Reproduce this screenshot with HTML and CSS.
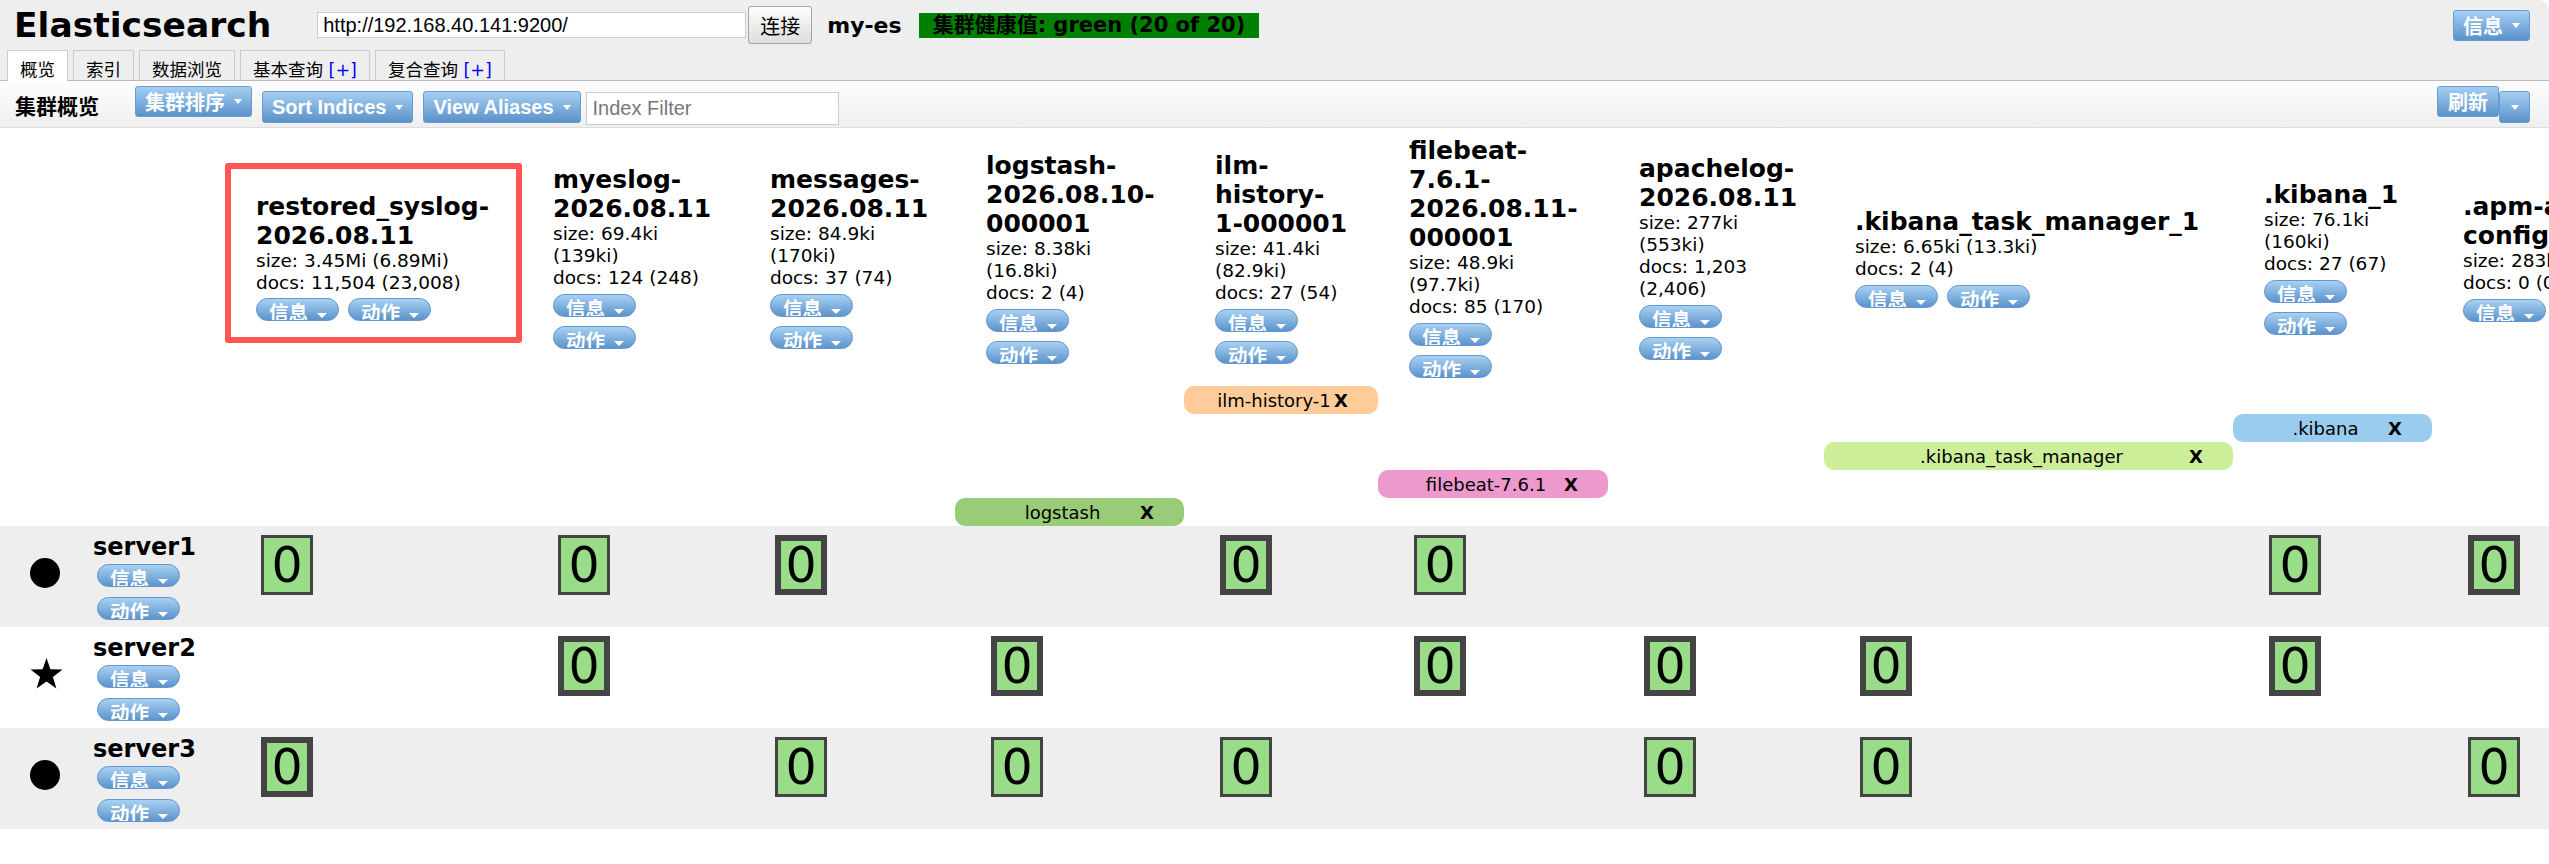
FILE: index.html
```html
<!DOCTYPE html>
<html lang="zh">
<head>
    <meta charset="UTF-8">
    <title>Elasticsearch Head</title>
    <link rel="stylesheet" href="styles.css">
</head>
<body>
    <div class="header">
        <div class="topbar">
            <h1 class="brand">Elasticsearch</h1>
            <input class="url" type="text" value="http://192.168.40.141:9200/">
            <button class="btn-plain">连接</button>
            <span class="cluster-name">my-es</span>
            <span class="health">集群健康值: green (20 of 20)</span>
            <span class="spacer"></span>
            <button class="btn-blue top-info">信息<span class="caret"></span></button>
        </div>
        <div class="tabs">
            <div class="tab active">概览</div>
            <div class="tab">索引</div>
            <div class="tab">数据浏览</div>
            <div class="tab">基本查询 <span class="plus">[+]</span></div>
            <div class="tab">复合查询 <span class="plus">[+]</span></div>
        </div>
    </div>

    <!-- 工具栏 -->
    <div class="toolbar">
        <span class="toolbar-title">集群概览</span>
        <button class="btn-blue cjk first">集群排序<span class="caret"></span></button>
        <button class="btn-blue latin">Sort Indices<span class="caret"></span></button>
        <button class="btn-blue latin">View Aliases<span class="caret"></span></button>
        <input class="filter" type="text" placeholder="Index Filter">
        <span class="spacer"></span>
        <button class="btn-blue cjk refresh">刷新</button>
        <button class="btn-blue latin refresh-menu"><span class="caret"></span></button>
    </div>

    <!-- 集群概览 -->
    <div class="overview">
        <table>
            <colgroup>
                <col class="c-node">
                <col class="c-restored">
                <col class="c-myeslog">
                <col class="c-messages">
                <col class="c-logstash">
                <col class="c-ilm">
                <col class="c-filebeat">
                <col class="c-apache">
                <col class="c-kibana-tm">
                <col class="c-kibana">
                <col class="c-apm">
            </colgroup>
            <tr class="index-row">
                <th></th>
                <th>
                    <div class="index selected">
                        <div class="index-body w232">
                            <div class="index-title">restored_syslog-2026.08.11</div>
                            <div class="index-stat">size: 3.45Mi (6.89Mi)</div>
                            <div class="index-stat">docs: 11,504 (23,008)</div>
                            <div class="index-actions">
                                <span class="pill">信息<span class="caret"></span></span>
                                <span class="pill">动作<span class="caret"></span></span>
                            </div>
                        </div>
                    </div>
                </th>
                <th>
                    <div class="index">
                        <div class="index-body w160">
                            <div class="index-title">myeslog-2026.08.11</div>
                            <div class="index-stat">size: 69.4ki (139ki)</div>
                            <div class="index-stat">docs: 124 (248)</div>
                            <div class="index-actions">
                                <span class="pill">信息<span class="caret"></span></span>
                                <span class="pill">动作<span class="caret"></span></span>
                            </div>
                        </div>
                    </div>
                </th>
                <th>
                    <div class="index">
                        <div class="index-body w160">
                            <div class="index-title">messages-2026.08.11</div>
                            <div class="index-stat">size: 84.9ki (170ki)</div>
                            <div class="index-stat">docs: 37 (74)</div>
                            <div class="index-actions">
                                <span class="pill">信息<span class="caret"></span></span>
                                <span class="pill">动作<span class="caret"></span></span>
                            </div>
                        </div>
                    </div>
                </th>
                <th>
                    <div class="index">
                        <div class="index-body w172">
                            <div class="index-title">logstash-2026.08.10-000001</div>
                            <div class="index-stat">size: 8.38ki (16.8ki)</div>
                            <div class="index-stat">docs: 2 (4)</div>
                            <div class="index-actions">
                                <span class="pill">信息<span class="caret"></span></span>
                                <span class="pill">动作<span class="caret"></span></span>
                            </div>
                        </div>
                    </div>
                </th>
                <th>
                    <div class="index">
                        <div class="index-body w134">
                            <div class="index-title">ilm-history-1-000001</div>
                            <div class="index-stat">size: 41.4ki (82.9ki)</div>
                            <div class="index-stat">docs: 27 (54)</div>
                            <div class="index-actions">
                                <span class="pill">信息<span class="caret"></span></span>
                                <span class="pill">动作<span class="caret"></span></span>
                            </div>
                        </div>
                    </div>
                </th>
                <th>
                    <div class="index">
                        <div class="index-body w172">
                            <div class="index-title">filebeat-7.6.1-2026.08.11-000001</div>
                            <div class="index-stat">size: 48.9ki (97.7ki)</div>
                            <div class="index-stat">docs: 85 (170)</div>
                            <div class="index-actions">
                                <span class="pill">信息<span class="caret"></span></span>
                                <span class="pill">动作<span class="caret"></span></span>
                            </div>
                        </div>
                    </div>
                </th>
                <th>
                    <div class="index">
                        <div class="index-body w162">
                            <div class="index-title">apachelog-2026.08.11</div>
                            <div class="index-stat">size: 277ki (553ki)</div>
                            <div class="index-stat">docs: 1,203 (2,406)</div>
                            <div class="index-actions">
                                <span class="pill">信息<span class="caret"></span></span>
                                <span class="pill">动作<span class="caret"></span></span>
                            </div>
                        </div>
                    </div>
                </th>
                <th>
                    <div class="index">
                        <div class="index-body w350">
                            <div class="index-title">.kibana_task_manager_1</div>
                            <div class="index-stat">size: 6.65ki (13.3ki)</div>
                            <div class="index-stat">docs: 2 (4)</div>
                            <div class="index-actions">
                                <span class="pill">信息<span class="caret"></span></span>
                                <span class="pill">动作<span class="caret"></span></span>
                            </div>
                        </div>
                    </div>
                </th>
                <th>
                    <div class="index">
                        <div class="index-body w140">
                            <div class="index-title">.kibana_1</div>
                            <div class="index-stat">size: 76.1ki (160ki)</div>
                            <div class="index-stat">docs: 27 (67)</div>
                            <div class="index-actions">
                                <span class="pill">信息<span class="caret"></span></span>
                                <span class="pill">动作<span class="caret"></span></span>
                            </div>
                        </div>
                    </div>
                </th>
                <th>
                    <div class="index">
                        <div class="index-body w200">
                            <div class="index-title">.apm-agent-configuration</div>
                            <div class="index-stat">size: 283b (566b)</div>
                            <div class="index-stat">docs: 0 (0)</div>
                            <div class="index-actions">
                                <span class="pill">信息<span class="caret"></span></span>
                                <span class="pill">动作<span class="caret"></span></span>
                            </div>
                        </div>
                    </div>
                </th>
            </tr>

            <!-- 别名 -->
            <tr class="alias-row">
                <td colspan="5"></td>
                <td><div class="alias peach"><span class="alias-name">ilm-history-1</span><span class="alias-x">X</span></div></td>
                <td colspan="5"></td>
            </tr>
            <tr class="alias-row">
                <td colspan="9"></td>
                <td><div class="alias blue"><span class="alias-name">.kibana</span><span class="alias-x">X</span></div></td>
                <td></td>
            </tr>
            <tr class="alias-row">
                <td colspan="8"></td>
                <td><div class="alias lime"><span class="alias-name">.kibana_task_manager</span><span class="alias-x">X</span></div></td>
                <td colspan="2"></td>
            </tr>
            <tr class="alias-row">
                <td colspan="6"></td>
                <td><div class="alias pink"><span class="alias-name">filebeat-7.6.1</span><span class="alias-x">X</span></div></td>
                <td colspan="4"></td>
            </tr>
            <tr class="alias-row">
                <td colspan="4"></td>
                <td><div class="alias green"><span class="alias-name">logstash</span><span class="alias-x">X</span></div></td>
                <td colspan="6"></td>
            </tr>

            <!-- 节点 -->
            <tr class="node-row shaded">
                <td>
                    <div class="node">
                        <span class="node-icon dot"></span>
                        <div class="node-info">
                            <div class="node-name">server1</div>
                            <span class="pill">信息<span class="caret"></span></span>
                            <span class="pill">动作<span class="caret"></span></span>
                        </div>
                    </div>
                </td>
                <td><div class="shard">0</div></td>
                <td><div class="shard">0</div></td>
                <td><div class="shard primary">0</div></td>
                <td></td>
                <td><div class="shard primary">0</div></td>
                <td><div class="shard">0</div></td>
                <td></td>
                <td></td>
                <td><div class="shard">0</div></td>
                <td><div class="shard primary">0</div></td>
            </tr>
            <tr class="node-row">
                <td>
                    <div class="node">
                        <svg class="node-icon" width="33" height="31" viewBox="0 0 33 31">
                            <polygon points="16.5,0 20.4,11.2 32.5,11.6 22.9,18.9 26.4,30.5 16.5,23.6 6.6,30.5 10.1,18.9 0.5,11.6 12.6,11.2" fill="#000"/>
                        </svg>
                        <div class="node-info">
                            <div class="node-name">server2</div>
                            <span class="pill">信息<span class="caret"></span></span>
                            <span class="pill">动作<span class="caret"></span></span>
                        </div>
                    </div>
                </td>
                <td></td>
                <td><div class="shard primary">0</div></td>
                <td></td>
                <td><div class="shard primary">0</div></td>
                <td></td>
                <td><div class="shard primary">0</div></td>
                <td><div class="shard primary">0</div></td>
                <td><div class="shard primary">0</div></td>
                <td><div class="shard primary">0</div></td>
                <td></td>
            </tr>
            <tr class="node-row shaded">
                <td>
                    <div class="node">
                        <span class="node-icon dot"></span>
                        <div class="node-info">
                            <div class="node-name">server3</div>
                            <span class="pill">信息<span class="caret"></span></span>
                            <span class="pill">动作<span class="caret"></span></span>
                        </div>
                    </div>
                </td>
                <td><div class="shard primary">0</div></td>
                <td></td>
                <td><div class="shard">0</div></td>
                <td><div class="shard">0</div></td>
                <td><div class="shard">0</div></td>
                <td></td>
                <td><div class="shard">0</div></td>
                <td><div class="shard">0</div></td>
                <td></td>
                <td><div class="shard">0</div></td>
            </tr>
        </table>
    </div>
</body>
</html>
```

FILE: styles.css
```css
body {
    margin: 0;
    font-family: "DejaVu Sans", "Noto Sans CJK SC", sans-serif;
    color: #000;
    background: #fff;
    overflow: hidden;
}
button, input {
    font-family: "Liberation Sans", "Noto Sans CJK SC", sans-serif;
    font-size: 20px;
}

/* 顶部 */
.header {
    background: #eee;
    border-bottom: 1px solid #bbb;
    border-top-right-radius: 10px;
}
.topbar {
    display: flex;
    align-items: center;
    height: 50px;
    padding-left: 14px;
}
.brand {
    margin: 0;
    font-size: 34.5px;
    font-weight: bold;
    line-height: 38px;
}
.url {
    margin-left: 46px;
    width: 429px;
    height: 26px;
    box-sizing: border-box;
    border: 1px solid #ccc;
    padding: 0 5px;
    background: #fff;
}
.btn-plain {
    margin-left: 2px;
    height: 38px;
    padding: 0 11px;
    border: 1px solid #a5a5a5;
    border-radius: 3px;
    background: linear-gradient(#fdfdfd, #dedede);
    color: #000;
}
.cluster-name {
    margin-left: 15px;
    font-size: 22px;
    font-weight: bold;
}
.health {
    margin-left: 17px;
    padding: 0 14px;
    height: 25px;
    line-height: 25px;
    background: #008000;
    font-size: 21px;
    font-weight: bold;
}
.spacer {
    flex: 1;
}
.top-info {
    margin-right: 19px;
    height: 32px;
}

.tabs {
    display: flex;
    gap: 5px;
    padding-left: 7px;
    height: 30px;
}
.tab {
    height: 30px;
    box-sizing: border-box;
    padding: 9px 12px 0;
    border: 1px solid #ccc;
    border-bottom: none;
    background: #eee;
    font-size: 17.5px;
    line-height: 20px;
    overflow: hidden;
}
.tab.active {
    height: 31px;
    margin-bottom: -1px;
    background: #fff;
}
.plus {
    color: #00f;
}

/* 按钮 */
.btn-blue {
    display: inline-flex;
    align-items: center;
    height: 31px;
    box-sizing: border-box;
    padding: 0 9px;
    border: 1px solid #6b9bd0;
    border-radius: 3px;
    background: linear-gradient(#a6cff2, #5a92ca);
    color: #fff;
    font-weight: bold;
    white-space: nowrap;
}
.btn-blue .caret {
    margin-left: 9px;
    border-left: 4px solid transparent;
    border-right: 4px solid transparent;
    border-top: 5px solid #fff;
}
.caret {
    display: inline-block;
    width: 0;
    height: 0;
}

.toolbar {
    display: flex;
    align-items: flex-start;
    height: 46px;
    padding-left: 15px;
    background: linear-gradient(#fdfdfd, #efefef);
    border-bottom: 1px solid #ddd;
}
.toolbar-title {
    margin-top: 14px;
    font-size: 21px;
    line-height: 24px;
    font-weight: bold;
}
.toolbar .cjk {
    margin-top: 5px;
}
.toolbar .latin {
    margin-top: 10px;
    height: 32px;
    margin-left: 10px;
}
.toolbar .first {
    margin-left: 36px;
}
.filter {
    margin: 11px 0 0 5px;
    width: 253px;
    height: 33px;
    box-sizing: border-box;
    border: 1px solid #ccc;
    padding: 0 6px;
}
.filter::placeholder {
    color: #777;
}
.refresh {
    padding: 0 10px;
}
.toolbar .refresh-menu {
    margin: 10px 19px 0 0;
    width: 31px;
    justify-content: center;
    padding: 0;
}
.refresh-menu .caret {
    margin-left: 0;
}

/* 集群概览 */
.overview {
    overflow: hidden;
}
table {
    border-collapse: collapse;
    table-layout: fixed;
    width: 2692px;
}
th, td {
    padding: 0;
}
.c-node { width: 225px; }
.c-restored { width: 297px; }
.c-myeslog { width: 217px; }
.c-messages { width: 216px; }
.c-logstash { width: 229px; }
.c-ilm { width: 194px; }
.c-filebeat { width: 230px; }
.c-apache { width: 216px; }
.c-kibana-tm { width: 409px; }
.c-kibana { width: 199px; }
.c-apm { width: 260px; }

.index-row th {
    height: 258px;
    vertical-align: middle;
    text-align: left;
    font-weight: normal;
}
.index {
    padding-left: 31px;
}
.index.selected {
    border: 6px solid #f55;
    border-radius: 3px;
    padding: 23px 0 16px 25px;
    margin-bottom: 8px;
}
.index.selected .index-actions {
    margin-top: 4px;
}
.w134 { width: 134px; }
.w140 { width: 140px; }
.w160 { width: 160px; }
.w162 { width: 162px; }
.w172 { width: 172px; }
.w200 { width: 200px; }
.w232 { width: 240px; }
.w350 { width: 360px; }
.index-title {
    font-size: 25px;
    line-height: 29px;
    font-weight: bold;
}
.index-stat {
    font-size: 18.5px;
    line-height: 22px;
}
.index-actions {
    display: flex;
    flex-wrap: wrap;
    gap: 9px;
    margin-top: 5px;
}

.pill {
    display: inline-flex;
    align-items: flex-start;
    height: 23px;
    box-sizing: border-box;
    padding: 4px 11px 0 12px;
    border: 1px solid #6497cd;
    border-radius: 12px;
    background: linear-gradient(#a9d1f3, #5b93cb);
    color: #fff;
    font-family: "Liberation Sans", "Noto Sans CJK SC", sans-serif;
    font-size: 19.5px;
    line-height: 20px;
    font-weight: bold;
    white-space: nowrap;
    overflow: hidden;
}
.pill .caret {
    margin: 10px 0 0 9px;
    border-left: 5px solid transparent;
    border-right: 5px solid transparent;
    border-top: 5px solid #fff;
}

.alias-row td {
    height: 28px;
}
.alias {
    display: grid;
    grid-template-columns: 1fr auto 1fr;
    align-items: center;
    height: 28px;
    padding-right: 14px;
    border-radius: 10px;
    font-size: 18px;
}
.alias-name {
    grid-column: 2;
    white-space: nowrap;
}
.alias-x {
    justify-self: end;
    margin-right: 16px;
    font-weight: bold;
}
.peach { background: #ffcc99; }
.blue { background: #99ccee; }
.lime { background: #ccee99; }
.pink { background: #ee99cc; }
.green { background: #99cc77; }

.node-row td {
    height: 101px;
    vertical-align: top;
}
.node-row.shaded {
    background: #eee;
}
.node {
    display: flex;
    align-items: center;
    height: 101px;
}
.node-icon {
    flex: none;
    margin: 0 0 8px 30px;
}
.dot {
    width: 30px;
    height: 30px;
    border-radius: 50%;
    background: #000;
}
svg.node-icon + .node-info {
    margin-left: 30px;
}
.node-info {
    margin-left: 33px;
}
.node-name {
    font-size: 24px;
    line-height: 29px;
    font-weight: bold;
    margin-bottom: 2px;
}
.node-info .pill {
    display: flex;
    width: fit-content;
    margin: 0 0 10px 4px;
}
.node-info .pill:last-child {
    margin-bottom: 0;
}
.shard {
    display: flex;
    align-items: center;
    justify-content: center;
    width: 52px;
    height: 60px;
    margin: 9px 0 0 36px;
    box-sizing: border-box;
    border: 3px solid #444;
    background: #99dd88;
    font-size: 49px;
    line-height: 1;
}
.shard.primary {
    border-width: 6px;
}
```
